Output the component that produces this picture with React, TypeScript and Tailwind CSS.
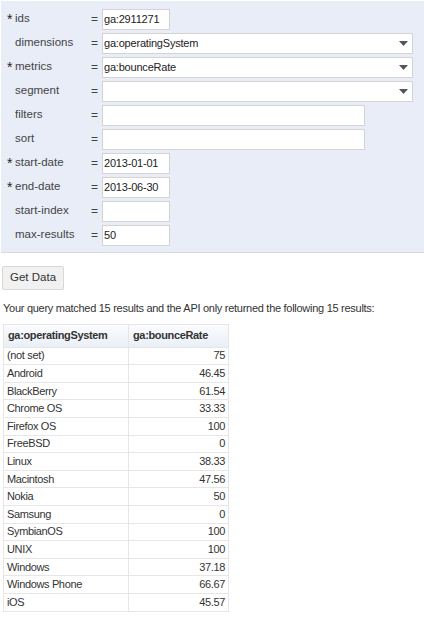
import React from 'react';

type Field = {
  name: string;
  required?: boolean;
  kind: 'short' | 'select' | 'text';
  value?: string;
};

const fields: Field[] = [
  { name: 'ids', required: true, kind: 'short', value: 'ga:2911271' },
  { name: 'dimensions', kind: 'select', value: 'ga:operatingSystem' },
  { name: 'metrics', required: true, kind: 'select', value: 'ga:bounceRate' },
  { name: 'segment', kind: 'select' },
  { name: 'filters', kind: 'text' },
  { name: 'sort', kind: 'text' },
  { name: 'start-date', required: true, kind: 'short', value: '2013-01-01' },
  { name: 'end-date', required: true, kind: 'short', value: '2013-06-30' },
  { name: 'start-index', kind: 'short' },
  { name: 'max-results', kind: 'short', value: '50' },
];

const rows: [string, string][] = [
  ['(not set)', '75'],
  ['Android', '46.45'],
  ['BlackBerry', '61.54'],
  ['Chrome OS', '33.33'],
  ['Firefox OS', '100'],
  ['FreeBSD', '0'],
  ['Linux', '38.33'],
  ['Macintosh', '47.56'],
  ['Nokia', '50'],
  ['Samsung', '0'],
  ['SymbianOS', '100'],
  ['UNIX', '100'],
  ['Windows', '37.18'],
  ['Windows Phone', '66.67'],
  ['iOS', '45.57'],
];

function FieldInput({ field }: { field: Field }) {
  if (field.kind === 'select') {
    return (
      <div className="flex h-[21px] w-[311px] items-center justify-between border border-[#d3d3d3] bg-white pl-[1px] pr-[4px] text-[11px] tracking-[-0.2px] text-[#222]">
        <span>{field.value ?? ''}</span>
        <svg width="9" height="5" viewBox="0 0 9 5">
          <path d="M0 0H9L4.5 5Z" fill="#555" />
        </svg>
      </div>
    );
  }
  const width = field.kind === 'short' ? 'w-[68px]' : 'w-[263px]';
  return (
    <div className={`flex h-[21px] ${width} items-center border border-[#d3d3d3] bg-white pl-[1px] text-[11px] tracking-[-0.2px] text-[#222]`}>
      {field.value ?? ''}
    </div>
  );
}

export default function App() {
  return (
    <div className="min-h-[618px] bg-white text-[#333] font-['Liberation_Sans',Arial,sans-serif]">
      <div className="ml-[1px] mt-[1px] border-b border-[#d6d9de] bg-[#e8edf8] pb-[5px] pt-[6px]">
        {fields.map((f) => (
          <div key={f.name} className="flex h-[24px] items-center">
            <div className="flex w-[90px] items-center pl-[6px] text-[11.5px] text-[#444]">
              <span className="w-[8px] text-[14px] leading-none text-[#222]">{f.required ? '*' : ''}</span>
              <span>{f.name}</span>
            </div>
            <span className="w-[11px] text-[12px] text-[#444]">=</span>
            <FieldInput field={f} />
          </div>
        ))}
      </div>

      <div className="pl-[2px] pt-[11px]">
        <button className="h-[24px] rounded-[2px] border border-[#d8d8d8] bg-[#f1f1f1] px-[7px] text-[11.5px] text-[#333]">
          Get Data
        </button>
      </div>

      <p className="whitespace-nowrap pl-[3px] pt-[11px] text-[11px] leading-[14px] tracking-[-0.28px] text-[#333]">
        Your query matched 15 results and the API only returned the following 15 results:
      </p>

      <table className="ml-[3px] mt-[9px] w-[226px] border-collapse border border-[#eeeeee] text-[11px] tracking-[-0.35px] text-[#333]">
        <thead>
          <tr className="h-[23px] bg-gradient-to-b from-[#fbfcfe] to-[#eaeff7]">
            <th className="w-[125px] border border-[#e6e6e6] px-[4px] text-left font-bold">ga:operatingSystem</th>
            <th className="border border-[#e6e6e6] px-[4px] text-left font-bold">ga:bounceRate</th>
          </tr>
        </thead>
        <tbody>
          {rows.map(([os, rate]) => (
            <tr key={os} className="h-[17.6px]">
              <td className="border border-[#e6e6e6] px-[3px] py-0 leading-[15px]">{os}</td>
              <td className="border border-[#e6e6e6] px-[3px] py-0 text-right leading-[15px]">{rate}</td>
            </tr>
          ))}
        </tbody>
      </table>
    </div>
  );
}
